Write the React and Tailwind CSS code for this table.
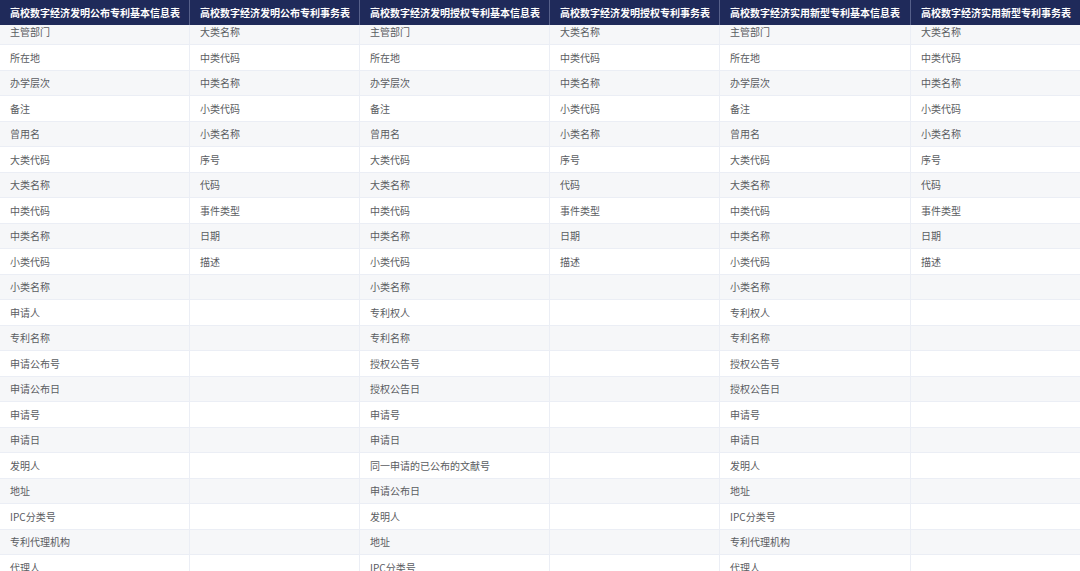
import React from 'react'

const common = ['主管部门', '所在地', '办学层次', '备注', '曾用名', '大类代码', '大类名称', '中类代码', '中类名称', '小类代码', '小类名称']
const affairs = ['大类名称', '中类代码', '中类名称', '小类代码', '小类名称', '序号', '代码', '事件类型', '日期', '描述']

const columns = [
  {
    title: '高校数字经济发明公布专利基本信息表',
    width: 'w-[190px]',
    items: [...common, '申请人', '专利名称', '申请公布号', '申请公布日', '申请号', '申请日', '发明人', '地址', 'IPC分类号', '专利代理机构', '代理人'],
  },
  { title: '高校数字经济发明公布专利事务表', width: 'w-[170px]', items: affairs },
  {
    title: '高校数字经济发明授权专利基本信息表',
    width: 'w-[190px]',
    items: [...common, '专利权人', '专利名称', '授权公告号', '授权公告日', '申请号', '申请日', '同一申请的已公布的文献号', '申请公布日', '发明人', '地址', 'IPC分类号'],
  },
  { title: '高校数字经济发明授权专利事务表', width: 'w-[170px]', items: affairs },
  {
    title: '高校数字经济实用新型专利基本信息表',
    width: 'w-[191px]',
    items: [...common, '专利权人', '专利名称', '授权公告号', '授权公告日', '申请号', '申请日', '发明人', '地址', 'IPC分类号', '专利代理机构', '代理人'],
  },
  { title: '高校数字经济实用新型专利事务表', width: 'w-[169px]', items: affairs },
]

const rowCount = 22

export default function App() {
  const rows = Array.from({ length: rowCount }, (_, i) => i)
  return (
    <div className="w-[1080px] h-[571px] overflow-hidden bg-white font-['Noto_Sans_CJK_SC','Noto_Sans',sans-serif]">
      {/* header */}
      <div className="flex h-[25px] bg-[#1f2a5a]">
        {columns.map((c, i) => (
          <div
            key={i}
            className={`${c.width} shrink-0 flex items-center pl-[10px] text-[10px] font-bold text-white whitespace-nowrap ${i < columns.length - 1 ? 'border-r border-[#56608a]' : ''}`}
          >
            {c.title}
          </div>
        ))}
      </div>

      {/* body, scrolled a little */}
      <div className="h-[546px] overflow-hidden">
        <div className="-mt-[5.5px]">
          {rows.map((r) => (
            <div
              key={r}
              className={`flex h-[25.5px] border-b border-[#ebeef5] ${r % 2 === 0 ? 'bg-[#f6f7f9]' : 'bg-white'}`}
            >
              {columns.map((c, i) => (
                <div
                  key={i}
                  className={`${c.width} shrink-0 flex items-center pl-[10px] text-[10px] text-[#5a5c61] whitespace-nowrap ${i < columns.length - 1 ? 'border-r border-[#ebeef5]' : ''}`}
                >
                  {c.items[r] || ''}
                </div>
              ))}
            </div>
          ))}
        </div>
      </div>
    </div>
  )
}
